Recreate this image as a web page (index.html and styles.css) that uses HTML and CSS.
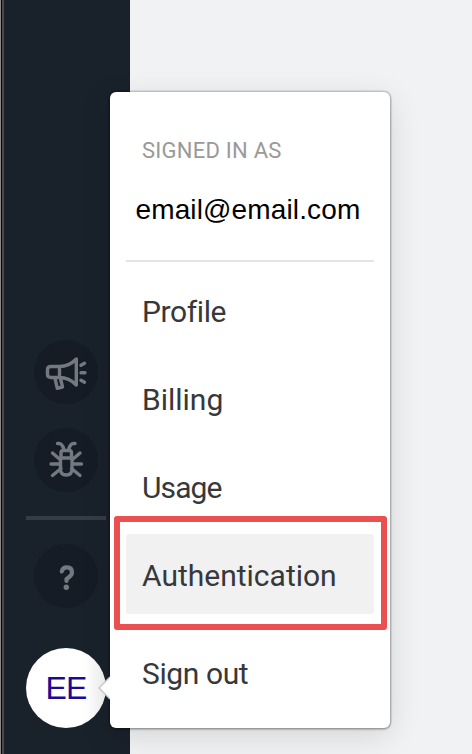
FILE: index.html
```html
<!DOCTYPE html>
<html lang="en">
<head>
<meta charset="utf-8">
<title>Account menu</title>
<link rel="stylesheet" href="styles.css">
</head>
<body>
<div class="app">
  <nav class="sidebar">
    <a class="tool" aria-label="Announcements">
      <svg width="64" height="64" viewBox="0 0 64 64">
        <path d="M17 26.500H25.500V37.500H17Q13.500 37.500 13.500 34.500V29.500Q13.500 26.500 17 26.500ZM25.500 26.500C32 26.500 38 23.500 42.300 19V45C38 40.500 32 37.500 25.500 37.500M21 38.500 23.300 48.300 28.500 47 26.500 38.500M47 25.300 50.500 23.300M47 32.700H51M47 40.200 50.500 42.200"/>
      </svg>
    </a>
    <a class="tool" aria-label="Report a bug">
      <svg width="64" height="64" viewBox="0 0 64 64">
        <path d="M27 30V25Q27 22.500 29.500 22.500H35Q37.500 22.500 37.500 25V30M26.500 30H38V41Q38 47 32.200 47T26.500 41ZM23.500 15.500H25Q28 15.500 29.800 21M41 15.500H39.500Q36.500 15.500 34.800 21M26 31.500 18.500 25M38.500 31.500 46 25M26 36H17M38.500 36H47.500M27 40.500 18.500 47.500M37.500 40.500 46 47.500"/>
      </svg>
    </a>
    <div class="divider"></div>
    <a class="tool help" aria-label="Help">
      <svg width="64" height="64" viewBox="0 0 64 64">
        <path d="M27.800 27.500Q28.500 23.300 33 23.300Q38 23.300 38 28.500Q38 31.500 32.500 35V37"/>
        <circle cx="32.300" cy="43.200" r="2.700"/>
      </svg>
    </a>
    <a class="avatar">EE</a>
  </nav>
  <main class="content"></main>
  <section class="menu">
    <div class="label">SIGNED IN AS</div>
    <div class="email">email@email.com</div>
    <a class="item profile">Profile</a>
    <a class="item billing">Billing</a>
    <a class="item usage">Usage</a>
    <a class="item active">Authentication<span class="callout"></span></a>
    <a class="item signout">Sign out</a>
    <svg class="pointer" width="12" height="24" viewBox="0 0 12 24"><path class="fill" d="M12 1 1 12 12 23Z"/><path class="edge" d="M12 1 1 12 12 23"/></svg>
  </section>
</div>
</body>
</html>
```
FILE: styles.css
```css
* { box-sizing: border-box; }
body { margin: 0; }
.app {
  position: relative;
  display: flex;
  width: 472px;
  height: 754px;
  overflow: hidden;
  font-family: Roboto, sans-serif;
}
.sidebar {
  display: flex;
  flex-direction: column;
  justify-content: flex-end;
  width: 130px;
  padding: 0 24px 26px 26px;
  background: linear-gradient(90deg, #8f8681 0 1px, #05070a 1px 2px, #454b53 2px 4px, #19212a 4px);
}
.content { flex: 1; background: #f0f2f4; }
.tool {
  width: 64px;
  height: 64px;
  margin: 0 0 24px 8px;
  border-radius: 50%;
  background: #151c25;
}
.tool svg { display: block; }
.tool path {
  fill: none;
  stroke: #747981;
  stroke-width: 3.4;
  stroke-linecap: round;
  stroke-linejoin: round;
}
.tool circle { fill: #747981; }
.tool.help { margin-bottom: 40px; }
.tool.help path { stroke-width: 4.2; }
.divider {
  height: 4px;
  margin-bottom: 24px;
  background: #353c46;
}
.avatar {
  width: 80px;
  height: 80px;
  border-radius: 50%;
  background: linear-gradient(90deg, #fff 75%, #f3f3f3);
  color: #1b0a98;
  font: 32px/81px "Liberation Sans", sans-serif;
  letter-spacing: -.8px;
  text-align: center;
}
.menu {
  position: absolute;
  left: 110px;
  top: 92px;
  width: 280px;
  height: 636px;
  padding: 43px 16px 16px;
  border-radius: 6px;
  background: #fff;
  box-shadow: 0 0 0 1.5px rgba(0, 0, 0, .14), 0 1px 3px rgba(0, 0, 0, .3), 0 8px 32px rgba(0, 0, 0, .12);
}
.label {
  padding-left: 16px;
  color: #999;
  font-size: 22px;
  line-height: 32px;
  letter-spacing: .25px;
}
.email {
  height: 95px;
  margin-bottom: 8px;
  padding-left: 9.5px;
  border-bottom: 2px solid #e4e4e4;
  color: #000;
  font: 28px/85px "Liberation Sans", sans-serif;
  letter-spacing: .13px;
}
.item {
  position: relative;
  display: block;
  height: 80px;
  margin-bottom: 8px;
  padding-left: 16px;
  border-radius: 3px;
  color: #36383a;
  font-size: 30px;
  line-height: 83px;
}
.profile, .signout { letter-spacing: -.4px; }
.billing { letter-spacing: 0; }
.usage { letter-spacing: -.9px; }
.active { margin-bottom: 18px; background: #f1f1f1; }
.signout { margin-bottom: 0; }
.callout {
  position: absolute;
  inset: -18px -13px -16px -12px;
  border: 6px solid #ea5050;
  border-radius: 3px;
  box-shadow: 0 0 2px 1px rgba(255, 255, 255, .8);
}
.pointer { position: absolute; left: -12px; top: 584px; }
.pointer .fill { fill: #fff; }
.pointer .edge { fill: none; stroke: #c8c8c8; stroke-width: 1.5; }
```
